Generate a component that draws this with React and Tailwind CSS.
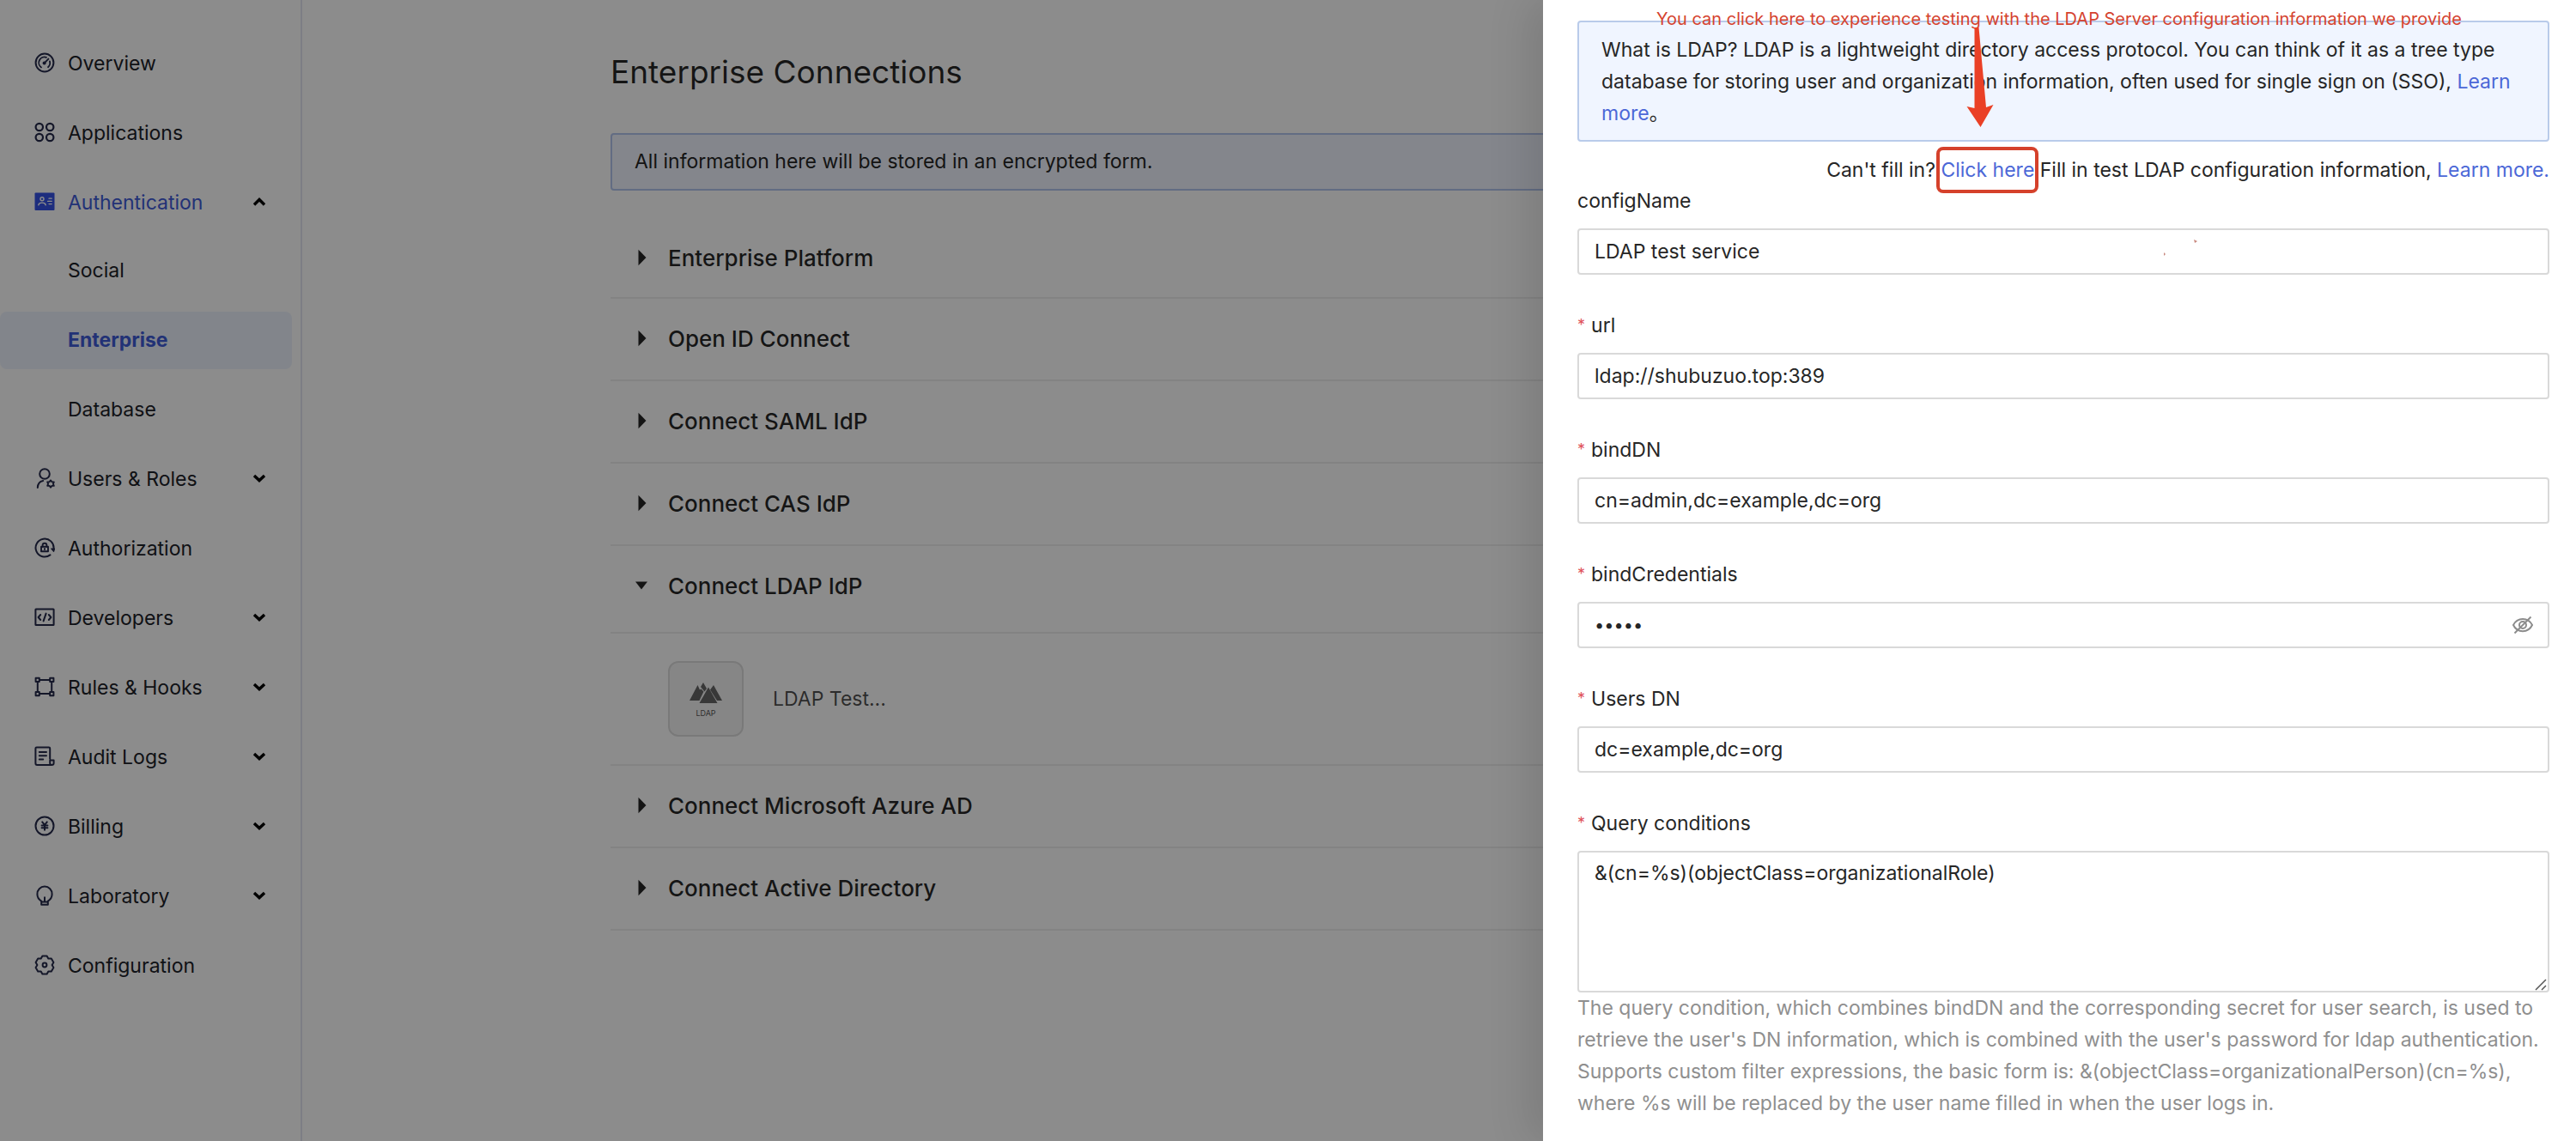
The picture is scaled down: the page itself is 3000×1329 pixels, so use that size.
import React from "react";

const stroke = {
  fill: "none",
  stroke: "currentColor",
  strokeWidth: 2,
  strokeLinecap: "round",
  strokeLinejoin: "round",
};

function Icon({ children }) {
  return (
    <svg viewBox="0 0 24 24" className="mb-1 size-6 shrink-0" aria-hidden="true" {...stroke}>
      {children}
    </svg>
  );
}

const icons = {
  overview: (
    <Icon>
      <circle cx="12" cy="12" r="10.4" />
      <path d="M8 17.4A6.600 6.600 0 0 1 14 5.800M17.900 10.400a6.400 6.400 0 0 1-1.900 6.800" strokeWidth="1.8" />
      <circle cx="11.6" cy="12.6" r="2" fill="currentColor" stroke="none" />
      <path d="M12 12.2l4.4-4.600" strokeWidth="1.9" />
    </Icon>
  ),
  applications: (
    <Icon>
      <circle cx="5.8" cy="6" r="4.2" strokeWidth="2.200" />
      <circle cx="18.2" cy="6" r="4.2" strokeWidth="2.200" />
      <circle cx="5.8" cy="18" r="4.2" strokeWidth="2.200" />
      <circle cx="18.2" cy="18" r="4.2" strokeWidth="2.200" />
    </Icon>
  ),
  authentication: (
    <Icon>
      <rect x="0.5" y="1.5" width="23" height="20.5" rx="1" fill="#3552e6" stroke="none" />
      <circle cx="9" cy="8.8" r="2" stroke="#fff" strokeWidth="1.4" />
      <path d="M4.8 15.800c.8-3.600 7.600-3.600 8.400 0" stroke="#fff" strokeWidth="1.4" />
      <path d="M17 8.200h3.200M15.600 11.400h4.600M17 14.600h3.200" stroke="#fff" strokeWidth="1.3" />
    </Icon>
  ),
  users: (
    <Icon>
      <circle cx="12" cy="7" r="5.8" />
      <path d="M3.800 23c.2-4.800 2.400-7.200 6.400-8" />
      <path
        d="M19 14.400l1.400 1.900 2.400.1-.9 2.200.9 2.200-2.400.1-1.400 1.900-1.400-1.900-2.400-.1.9-2.200-.9-2.200 2.400-.1z"
        strokeWidth="1.9"
      />
    </Icon>
  ),
  authorization: (
    <Icon>
      <path d="M18.400 20.400A10.500 10.500 0 1 1 22.500 13" />
      <path d="M19.800 13h3.800l-1 3.400z" fill="currentColor" strokeWidth="1.2" />
      <rect x="8" y="10.800" width="8" height="5.400" strokeWidth="1.9" />
      <path d="M9.600 10.800V9.200a2.400 2.400 0 0 1 4.800 0v1.600M12 13v1" strokeWidth="1.9" />
    </Icon>
  ),
  developers: (
    <Icon>
      <rect x="1.4" y="2.5" width="21.2" height="18.5" rx=".5" />
      <path d="M7.200 9L4.600 12l2.600 3M16.800 9l2.600 3-2.600 3M13.600 7.600l-3 8.800" />
    </Icon>
  ),
  rules: (
    <Icon>
      <rect x="1.6" y="1.8" width="4.2" height="4.2" />
      <rect x="18.2" y="1.8" width="4.2" height="4.2" />
      <rect x="1.6" y="18" width="4.2" height="4.2" />
      <rect x="18.2" y="18" width="4.2" height="4.2" />
      <path d="M6 4h12M6 20h12M3.800 6.400v11.200M20.200 6.400v11.200" />
    </Icon>
  ),
  audit: (
    <Icon>
      <path d="M18.200 15V2.800c0-.8-.5-1.300-1.300-1.300H2.700c-.8 0-1.300.5-1.300 1.300v17.300c0 1.200.6 1.900 1.800 1.900h17c1.500 0 2.400-.8 2.400-2.200V16.400h-4.400v3.400c0 1.400.6 2.200 2 2.200" />
      <path d="M5.800 7h8.200M5.800 11.200h8.200M5.800 15.400h4.400" />
    </Icon>
  ),
  billing: (
    <Icon>
      <circle cx="12" cy="12" r="10.5" />
      <path d="M9.200 7.400L12 10.800l2.800-3.400M12 10.800v6M8.600 11.400h6.800M8.600 14.200h6.800" />
    </Icon>
  ),
  laboratory: (
    <Icon>
      <path d="M8.200 22.800h7.600v-4.200c3-1.800 4.800-4.400 4.800-8A8.600 8.600 0 0 0 12 1.600a8.600 8.600 0 0 0-8.600 9c0 3.600 1.800 6.200 4.800 8zM8.200 19.600h7.600M12 19.200v-5" />
    </Icon>
  ),
  configuration: (
    <Icon>
      <path d="M9.400 1.500h5.200l1.700 3.100 3.500-.1L22.400 9l-1.800 3 1.800 3-2.600 4.500-3.500-.1-1.700 3.100H9.400l-1.700-3.100-3.500.1L1.600 15l1.800-3-1.800-3 2.600-4.500 3.500.1z" />
      <circle cx="12" cy="12" r="2.4" />
    </Icon>
  ),
};

function Chevron({ up }) {
  return (
    <svg viewBox="0 0 16 12" className="mb-1 ml-auto h-3 w-4" fill="none" stroke="#000" strokeWidth="3.4" aria-hidden="true">
      <path d={up ? "M2 9.500l6-6 6 6" : "M2 3l6 5.600L14 3"} />
    </svg>
  );
}

const nav = [
  { label: "Overview", icon: "overview" },
  { label: "Applications", icon: "applications" },
  {
    label: "Authentication",
    icon: "authentication",
    open: true,
    children: ["Social", "Enterprise", "Database"],
  },
  { label: "Users & Roles", icon: "users", more: true },
  { label: "Authorization", icon: "authorization" },
  { label: "Developers", icon: "developers", more: true },
  { label: "Rules & Hooks", icon: "rules", more: true },
  { label: "Audit Logs", icon: "audit", more: true },
  { label: "Billing", icon: "billing", more: true },
  { label: "Laboratory", icon: "laboratory", more: true },
  { label: "Configuration", icon: "configuration" },
];

function NavItem({ item }) {
  const tone = item.open ? "text-[#3f5bd8]" : "text-[#1d2129]";
  const iconTone = item.open ? "" : "text-[#262a4c]";
  const body = (
    <>
      <span className={iconTone}>{icons[item.icon]}</span>
      <span>{item.label}</span>
      {(item.more || item.open) && <Chevron up={item.open} />}
    </>
  );
  const cls = "flex h-[67px] w-full items-center gap-[15px] pr-10 pl-10 text-left " + tone;
  return item.more || item.open ? (
    <button type="button" aria-expanded={!!item.open} className={cls}>{body}</button>
  ) : (
    <a href="#" className={cls}>{body}</a>
  );
}

function Sidebar() {
  return (
    <nav className="w-[352px] shrink-0 border-r-2 border-[#e4e6f2] pt-[41px]">
      <ul className="flex flex-col gap-[14px]">
        {nav.map((item) => (
          <li key={item.label}>
            <NavItem item={item} />
            {item.children && (
              <ul className="mt-3 flex flex-col gap-[14px]">
                {item.children.map((c) => (
                  <li key={c}>
                    <a
                      href="#"
                      className={
                        c === "Enterprise"
                          ? "mr-[10px] flex h-[67px] items-center rounded-lg bg-[#edf3fd] pl-[79px] font-bold text-[#3f5bd8]"
                          : "mr-[10px] flex h-[67px] items-center pl-[79px] text-[#1d2129]"
                      }
                    >
                      {c}
                    </a>
                  </li>
                ))}
              </ul>
            )}
          </li>
        ))}
      </ul>
    </nav>
  );
}

function Row({ label, open, first }) {
  const height = open ? "h-[102px] pb-2" : first ? "h-[94px]" : "h-24 pb-[2px]";
  return (
    <button
      type="button"
      aria-expanded={!!open}
      className={
        "flex w-full items-center border-b-2 border-[#eeeeee] pl-[26px] text-[26px] font-medium text-black/85 " + height
      }
    >
      <svg viewBox="0 0 20 20" className="mr-[21px] size-5" fill="currentColor" aria-hidden="true">
        <path d={open ? "M3 5.500h14L10 14.500z" : "M6.500 0.800v18.400L15.500 10z"} />
      </svg>
      {label}
    </button>
  );
}

function Main() {
  return (
    <main className="flex-1">
      <div className="mx-auto w-full max-w-[1930px]">
        <h1 className="pt-[60px] text-[37px] leading-12 text-black/85">Enterprise Connections</h1>
        <div className="mt-[47px] flex h-[67px] items-center rounded-sm border-2 border-[#b3c5ee] bg-[#f0f5ff] px-[26px]">
          All information here will be stored in an encrypted form.
        </div>
        <div className="mt-8">
          <Row label="Enterprise Platform" first />
          <Row label="Open ID Connect" />
          <Row label="Connect SAML IdP" />
          <Row label="Connect CAS IdP" />
          <Row label="Connect LDAP IdP" open />
          <div className="flex h-[154px] items-center border-b-2 border-[#eeeeee] pl-[67px]">
            <div className="mr-[34px] flex size-[88px] flex-col items-center justify-center rounded-xl border-2 border-[#dddddd] bg-[#f5f5f5] pt-1">
              <svg viewBox="0 0 38 24" className="h-6 w-[38px]" fill="#666" aria-hidden="true">
                <path d="M9.500 3L0 21h11.500l5-10.500-3-3-1.500 1z" />
                <path d="M16 0l-3 5 4.500 5.500L20 7z" />
                <path d="M28 3l-4 5.500L32 21h6z" />
                <path d="M22 5.500L11.500 24h21z" />
              </svg>
              <span className="mt-[6px] text-[9px] leading-3 text-[#555]">LDAP</span>
            </div>
            <span className="text-black/70">LDAP Test...</span>
          </div>
          <Row label="Connect Microsoft Azure AD" />
          <Row label="Connect Active Directory" />
        </div>
      </div>
    </main>
  );
}

const boxCls = "block w-full rounded-sm border-2 border-[#d9d9d9] bg-white px-[18px] text-[#262626] outline-none";

const labelCls = "flex h-12 items-start leading-8";

function Star() {
  return <span className="mr-[7px] text-[18px] text-[#e0525a]">*</span>;
}

function Field({ id, label, value, required, type = "text", children }) {
  return (
    <div className="mb-[43px]">
      <label htmlFor={id} className={labelCls}>
        {required && <Star />}
        {label}
      </label>
      <div className="relative">
        <input
          id={id}
          type={type}
          defaultValue={value}
          className={boxCls + " h-[54px]" + (type === "password" ? " text-[20px]" : "")}
        />
        {children}
      </div>
    </div>
  );
}

function Drawer() {
  return (
    <aside
      role="dialog"
      aria-label="LDAP configuration"
      className="absolute inset-y-0 right-0 w-[1203px] bg-white pt-6 pr-[31px] pl-10 shadow-[-15px_0_48px_rgba(0,0,0,0.12)]"
    >
      <div className="h-[141px] rounded-sm border-2 border-[#b9cbea] bg-[#f0f5ff] px-[26px] pt-[14px] leading-[37px]">
        What is LDAP? LDAP is a lightweight directory access protocol. You can think of it as a tree type
        database for storing user and organization information, often used for single sign on (SSO),{" "}
        <a href="#" className="text-[#4c68d7]">Learn more</a>。
      </div>
      <p className="mt-[15px] text-right leading-9">
        Can't fill in?{" "}
        <button type="button" className="relative text-[#4c68d7]">
          Click here
          <span className="absolute -inset-x-[5px] -inset-y-[9px] rounded-lg border-4 border-[#d5412b]" />
        </button>{" "}
        Fill in test LDAP configuration information, <a href="#" className="text-[#4c68d7]">Learn more.</a>
      </p>
      <form className="mt-[2px]">
        <Field id="configName" label="configName" value="LDAP test service">
          <svg
            viewBox="0 0 42 24"
            className="pointer-events-none absolute top-[10px] right-[409px] h-6 w-[42px]"
            fill="#c98a80"
            aria-hidden="true"
          >
            <path d="M37 3l4 2-3 2zM2 18l2 2-2 2z" />
          </svg>
        </Field>
        <Field id="url" label="url" value="ldap://shubuzuo.top:389" required />
        <Field id="bindDN" label="bindDN" value="cn=admin,dc=example,dc=org" required />
        <Field id="bindCredentials" label="bindCredentials" value="admin" type="password" required>
          <button
            type="button"
            aria-label="Show password"
            className="absolute inset-y-0 right-[19px] flex items-center text-[#8c8c8c]"
          >
            <svg viewBox="0 0 24 24" className="size-6" fill="none" stroke="currentColor" strokeWidth="2" aria-hidden="true">
              <path d="M1 12c4.500-9.500 17.500-9.500 22 0-4.500 9.500-17.500 9.500-22 0z" />
              <circle cx="12" cy="12" r="4" />
              <path d="M2.500 21.500l19-19" />
            </svg>
          </button>
        </Field>
        <Field id="usersDN" label="Users DN" value="dc=example,dc=org" required />
        <label htmlFor="query" className={labelCls}>
          <Star />
          Query conditions
        </label>
        <div className="relative">
          <textarea
            id="query"
            defaultValue="&(cn=%s)(objectClass=organizationalRole)"
            className={boxCls + " h-[165px] resize-none pt-[6px] leading-[37px]"}
          />
          <svg
            viewBox="0 0 14 14"
            className="pointer-events-none absolute right-[3px] bottom-[2px] size-[14px]"
            stroke="#555"
            strokeWidth="1.500"
            aria-hidden="true"
          >
            <path d="M1 13L13 1M8 13l5-5" />
          </svg>
        </div>
        <p className="leading-[37px] text-[#8f8f8f]">
          The query condition, which combines bindDN and the corresponding secret for user search, is used to
          retrieve the user's DN information, which is combined with the user's password for ldap authentication.
          Supports custom filter expressions, the basic form is: &(objectClass=organizationalPerson)(cn=%s),
          where %s will be replaced by the user name filled in when the user logs in.
        </p>
      </form>
      <span className="absolute top-[6px] left-[132px] text-[20px] leading-8 whitespace-nowrap text-[#d5432f]">
        You can click here to experience testing with the LDAP Server configuration information we provide
      </span>
      <svg
        viewBox="0 0 32 118"
        className="absolute top-[31px] left-[493px] h-[118px] w-8"
        fill="#ea4026"
        aria-hidden="true"
      >
        <path d="M9.500 1h5L23 94l8.500-3L16.500 117 0.500 93l9 2z" />
      </svg>
    </aside>
  );
}

export default function App() {
  return (
    <div className="relative flex min-h-screen overflow-hidden bg-white font-[Inter,'Noto_Sans_CJK_SC',sans-serif] text-[23px] text-[#262626]">
      <Sidebar />
      <Main />
      <div className="absolute inset-0 bg-black/45" />
      <Drawer />
    </div>
  );
}
